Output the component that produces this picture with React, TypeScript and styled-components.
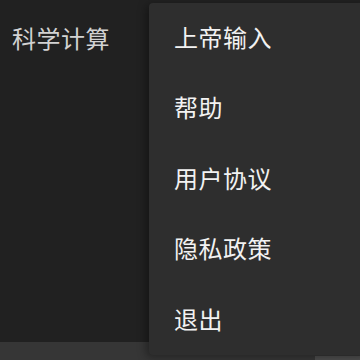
import styled, { createGlobalStyle } from "styled-components";

const Global = createGlobalStyle`
  html, body {
    margin: 0;
    padding: 0;
    background: #212121;
  }
  body {
    font-family: "Noto Sans CJK SC", "Noto Sans", sans-serif;
  }
`;

const Screen = styled.div`
  position: relative;
  width: 360px;
  height: 360px;
  overflow: hidden;
  display: flex;
  flex-direction: column;
  background: #212121;
`;

const Header = styled.div`
  height: 78px;
  padding-left: 12px;
  display: flex;
  align-items: flex-start;
  padding-top: 19px;
  box-sizing: border-box;
`;

const Title = styled.div`
  color: #d2d2d2;
  font-size: 24px;
  line-height: 38px;
  letter-spacing: 0.5px;
`;

const Body = styled.div`
  flex: 1;
`;

const BottomBar = styled.div`
  height: 18px;
  display: flex;
  justify-content: flex-end;
  background: #363636;
`;

const BottomKey = styled.div`
  width: 45px;
  margin-top: 14px;
  background: #4d4d4d;
`;

const Menu = styled.ul`
  position: absolute;
  top: 3px;
  left: 149px;
  width: 220px;
  height: 352px;
  margin: 0;
  padding: 0;
  list-style: none;
  background: #2e2e2e;
  border-radius: 4px;
  box-shadow: -3px 2px 8px rgba(0, 0, 0, 0.35);
  display: flex;
  flex-direction: column;
`;

const Item = styled.li`
  height: 70.5px;
  flex: none;
  box-sizing: border-box;
  padding-bottom: 4px;
  display: flex;
  align-items: center;
  padding-left: 25px;
  color: #f2f2f2;
  font-size: 24px;
  letter-spacing: 0.5px;
`;

const items = ["上帝输入", "帮助", "用户协议", "隐私政策", "退出"];

export default function App() {
  return (
    <>
      <Global />
      <Screen>
        <Header>
          <Title>科学计算</Title>
        </Header>
        <Body />
        <BottomBar>
          <BottomKey />
        </BottomBar>
        <Menu>
          {items.map((t) => (
            <Item key={t}>{t}</Item>
          ))}
        </Menu>
      </Screen>
    </>
  );
}
